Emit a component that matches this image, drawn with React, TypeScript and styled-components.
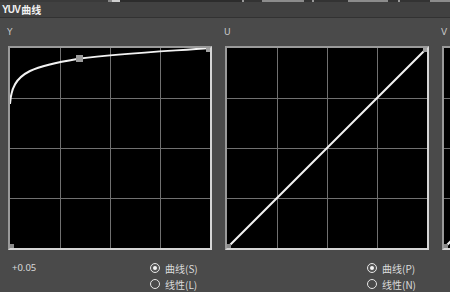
import React from "react";
import styled, { createGlobalStyle } from "styled-components";

const Global = createGlobalStyle`
  html, body { margin: 0; padding: 0; background: #4a4a4a; overflow: hidden; }
  body { width: 450px; height: 292px; font-family: "Noto Sans CJK SC", "Noto Sans", sans-serif; }
`;

const Page = styled.div`
  width: 450px;
  height: 292px;
  display: flex;
  flex-direction: column;
  background: #4a4a4a;
  overflow: hidden;
`;

const TopStrip = styled.div`
  height: 3px;
  display: flex;
  background: #2c2c2c;
`;

const StripSeg = styled.div<{ $w: number; $c: string }>`
  width: ${(p) => p.$w}px;
  flex: none;
  background: ${(p) => p.$c};
`;

const GreenLine = styled.div`
  height: 1px;
  background: #6f9a52;
`;

const TitleBar = styled.div`
  height: 16px;
  display: flex;
  align-items: center;
  padding-left: 2px;
  background: #414141;
  border-bottom: 1px solid #323232;
  color: #f2f2f2;
  font-size: 10px;
  font-weight: 700;
`;

const TitleLatin = styled.span`
  font-family: "Liberation Sans", sans-serif;
  letter-spacing: -0.8px;
  margin-right: 1px;
`;

const Content = styled.div`
  display: grid;
  grid-template-columns: 204px 204px 204px;
  column-gap: 13px;
  padding: 9px 0 0 8px;
`;

const Column = styled.div`
  display: flex;
  flex-direction: column;
`;

const ChannelLabel = styled.div`
  height: 10px;
  line-height: 10px;
  font-family: "DejaVu Sans", sans-serif;
  font-size: 9px;
  color: #c8c8c8;
  margin: 0 0 9px -1px;
`;

const GraphFrame = styled.div`
  width: 200px;
  height: 200px;
  border: 2px solid #9a9a9a;
  border-right-color: #d6d6d6;
  border-bottom-color: #d6d6d6;
  background: #000;
`;

const Footer = styled.div`
  display: flex;
  margin-top: 10px;
`;

const Value = styled.div`
  width: 138px;
  padding-left: 4px;
  height: 16px;
  line-height: 16px;
  font-family: "Noto Sans", sans-serif;
  font-size: 9.5px;
  color: #dadada;
`;

const RadioGroup = styled.div`
  display: flex;
  flex-direction: column;
`;

const RadioRow = styled.div`
  height: 16px;
  display: flex;
  align-items: center;
  gap: 5px;
  font-size: 10px;
  color: #dcdcdc;
`;

const RadioDot = styled.span<{ $on: boolean }>`
  width: 8px;
  height: 8px;
  border-radius: 50%;
  border: 1.5px solid #e6e6e6;
  background: ${(p) => (p.$on ? "#555" : "transparent")};
  display: flex;
  align-items: center;
  justify-content: center;
  &::after {
    content: "";
    width: 4px;
    height: 4px;
    border-radius: 50%;
    background: ${(p) => (p.$on ? "#f4f4f4" : "transparent")};
  }
`;

const Grid = () => (
  <g stroke="#707070" strokeWidth="1">
    {[50, 100, 150].map((v) => (
      <React.Fragment key={v}>
        <line x1={v + 0.5} y1="0" x2={v + 0.5} y2="200" />
        <line x1="0" y1={v + 0.5} x2="200" y2={v + 0.5} />
      </React.Fragment>
    ))}
  </g>
);

const Graph = ({ kind }: { kind: "curve" | "line" }) => (
  <GraphFrame>
    <svg width="200" height="200" viewBox="0 0 200 200" style={{ display: "block" }}>
      <Grid />
      {kind === "curve" ? (
        <>
          <path
            d="M0,56 C1,40 6,30 20,23 C35,16 55,13 70,10.5 C110,5.5 160,3 200,0"
            fill="none"
            stroke="#f2f2f2"
            strokeWidth="2"
          />
          <rect x="66" y="7" width="7" height="7" fill="#9c9c9c" />
          <rect x="196" y="0" width="4" height="4" fill="#a0a0a0" />
          <rect x="0" y="196" width="4" height="4" fill="#8a8a8a" />
        </>
      ) : (
        <>
          <line x1="0" y1="200" x2="200" y2="0" stroke="#f2f2f2" strokeWidth="2" />
          <rect x="196" y="0" width="4" height="4" fill="#a0a0a0" />
          <rect x="0" y="196" width="4" height="4" fill="#8a8a8a" />
        </>
      )}
    </svg>
  </GraphFrame>
);

const Radios = ({ a, b }: { a: string; b: string }) => (
  <RadioGroup>
    <RadioRow>
      <RadioDot $on />
      {a}
    </RadioRow>
    <RadioRow>
      <RadioDot $on={false} />
      {b}
    </RadioRow>
  </RadioGroup>
);

const strip: [number, string][] = [
  [108, "#3a3a3a"],
  [4, "#888"],
  [8, "#cfcfcf"],
  [122, "#2c2c2c"],
  [2, "#9a9a9a"],
  [18, "#333"],
  [42, "#8c8c8c"],
  [8, "#333"],
  [2, "#9a9a9a"],
  [34, "#333"],
  [40, "#8c8c8c"],
  [10, "#333"],
  [2, "#9a9a9a"],
  [30, "#333"],
  [20, "#8c8c8c"],
];

export default function App() {
  return (
    <Page>
      <Global />
      <TopStrip>
        {strip.map(([w, c], i) => (
          <StripSeg key={i} $w={w} $c={c} />
        ))}
      </TopStrip>
      <GreenLine />
      <TitleBar>
        <TitleLatin>YUV</TitleLatin>曲线
      </TitleBar>
      <Content>
        <Column>
          <ChannelLabel>Y</ChannelLabel>
          <Graph kind="curve" />
          <Footer>
            <Value>+0.05</Value>
            <Radios a="曲线(S)" b="线性(L)" />
          </Footer>
        </Column>
        <Column>
          <ChannelLabel>U</ChannelLabel>
          <Graph kind="line" />
          <Footer>
            <Value />
            <Radios a="曲线(P)" b="线性(N)" />
          </Footer>
        </Column>
        <Column>
          <ChannelLabel>V</ChannelLabel>
          <Graph kind="line" />
        </Column>
      </Content>
    </Page>
  );
}
